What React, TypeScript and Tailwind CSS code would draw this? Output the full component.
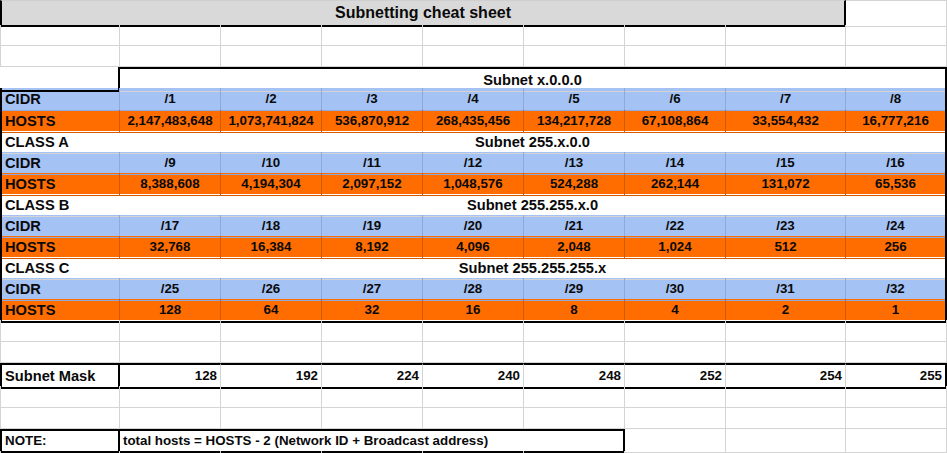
import React from "react";

const COLS = "grid grid-cols-[120px_101px_101px_101px_101px_101px_101px_120px_101px]";
const GRID = "border-[#d4d4d4]";

const sections = [
  {
    klass: "",
    subnet: "Subnet x.0.0.0",
    cidr: ["/1", "/2", "/3", "/4", "/5", "/6", "/7", "/8"],
    hosts: ["2,147,483,648", "1,073,741,824", "536,870,912", "268,435,456", "134,217,728", "67,108,864", "33,554,432", "16,777,216"],
  },
  {
    klass: "CLASS A",
    subnet: "Subnet 255.x.0.0",
    cidr: ["/9", "/10", "/11", "/12", "/13", "/14", "/15", "/16"],
    hosts: ["8,388,608", "4,194,304", "2,097,152", "1,048,576", "524,288", "262,144", "131,072", "65,536"],
  },
  {
    klass: "CLASS B",
    subnet: "Subnet 255.255.x.0",
    cidr: ["/17", "/18", "/19", "/20", "/21", "/22", "/23", "/24"],
    hosts: ["32,768", "16,384", "8,192", "4,096", "2,048", "1,024", "512", "256"],
  },
  {
    klass: "CLASS C",
    subnet: "Subnet 255.255.255.x",
    cidr: ["/25", "/26", "/27", "/28", "/29", "/30", "/31", "/32"],
    hosts: ["128", "64", "32", "16", "8", "4", "2", "1"],
  },
];

const masks = ["128", "192", "224", "240", "248", "252", "254", "255"];

function BlankRow({ h }: { h: string }) {
  return (
    <div className={`${COLS} ${h}`}>
      {Array.from({ length: 9 }).map((_, i) => (
        <div key={i} className={`border-b border-r ${GRID} ${i === 0 ? "border-l" : ""}`} />
      ))}
    </div>
  );
}

function Section({ s, first, last }: { s: (typeof sections)[number]; first: boolean; last: boolean }) {
  return (
    <>
      {/* class / subnet heading row */}
      {s.klass ? (
        <div className={`${COLS} h-[21px]`}>
          <div className={`border-l-2 border-l-black border-b ${GRID} pl-[3px] flex items-center text-[14.67px]`}>
            {s.klass}
          </div>
          <div className={`col-span-8 border-r-2 border-r-black border-b ${GRID} flex items-center justify-center text-[14.67px]`}>
            {s.subnet}
          </div>
        </div>
      ) : (
        <div className={`${COLS} h-[21px]`}>
          <div className="border-b-2 border-r-2 border-black" />
          <div className={`col-span-8 border-t-2 border-t-black border-r-2 border-r-black border-b ${GRID} flex items-center justify-center text-[14.67px]`}>
            {s.subnet}
          </div>
        </div>
      )}

      {/* CIDR row */}
      <div className={`${COLS} ${first ? "h-[22px]" : "h-[21px]"} bg-[#a4c2f4]`}>
        <div className="border-l-2 border-l-black border-r border-r-[#8eaadc] border-b border-b-[#8eaadc] pl-[3px] flex items-center text-[14.67px]">
          CIDR
        </div>
        {s.cidr.map((c, i) => (
          <div
            key={c}
            className={`border-b border-b-[#8eaadc] flex items-center justify-center text-[13.33px] ${
              i === 7 ? "border-r-2 border-r-black" : "border-r border-r-[#8eaadc]"
            }`}
          >
            {c}
          </div>
        ))}
      </div>

      {/* HOSTS row */}
      <div className={`${COLS} h-[21px] bg-[#ff6d01]`}>
        <div
          className={`border-l-2 border-l-black border-r border-r-[#d25a00] pl-[3px] flex items-center text-[14.67px] ${
            last ? "border-b-2 border-b-black" : "border-b border-b-[#d25a00]"
          }`}
        >
          HOSTS
        </div>
        {s.hosts.map((h, i) => (
          <div
            key={h}
            className={`flex items-center justify-center text-[13.33px] ${
              i === 7 ? "border-r-2 border-r-black" : "border-r border-r-[#d25a00]"
            } ${last ? "border-b-2 border-b-black" : "border-b border-b-[#d25a00]"}`}
          >
            {h}
          </div>
        ))}
      </div>
    </>
  );
}

export default function App() {
  return (
    <div className="w-[947px] h-[453px] overflow-hidden bg-white text-[#0a0a0a] font-bold font-['Liberation_Sans',Arial,sans-serif]">
      {/* Title */}
      <div className={`${COLS} h-[25px]`}>
        <div className="col-span-8 bg-[#d9d9d9] border-t border-t-[#cfcfcf] border-l-2 border-r-2 border-b-2 border-l-black border-r-black border-b-black flex items-center justify-center text-[16px]">
          Subnetting cheat sheet
        </div>
        <div className={`border-t border-b border-r ${GRID}`} />
      </div>

      <BlankRow h="h-[21px]" />
      <BlankRow h="h-[21px]" />

      {sections.map((s, i) => (
        <Section key={s.subnet} s={s} first={i === 0} last={i === sections.length - 1} />
      ))}

      <BlankRow h="h-[22px]" />
      <BlankRow h="h-[21px]" />

      {/* Subnet mask */}
      <div className={`${COLS} h-[23px]`}>
        <div className="border-2 border-black pl-[3px] flex items-center text-[14.67px]">Subnet Mask</div>
        {masks.map((m, i) => (
          <div
            key={m}
            className={`border-t-2 border-b-2 border-t-black border-b-black flex items-center justify-end pr-[3px] text-[13.33px] ${
              i === 7 ? "border-r-2 border-r-black" : `border-r ${GRID}`
            }`}
          >
            {m}
          </div>
        ))}
      </div>

      <BlankRow h="h-[22px]" />
      <BlankRow h="h-[21px]" />

      {/* Note */}
      <div className={`${COLS} h-[22px]`}>
        <div className="border-2 border-black pl-[3px] flex items-center text-[13.33px]">NOTE:</div>
        <div className="col-span-5 border-2 border-l-0 border-black pl-[3px] flex items-center text-[13.33px]">
          total hosts = HOSTS - 2 (Network ID + Broadcast address)
        </div>
        <div className={`border-b border-r ${GRID}`} />
        <div className={`border-b border-r ${GRID}`} />
        <div className={`border-b border-r ${GRID}`} />
      </div>

      <BlankRow h="h-[21px]" />
    </div>
  );
}
